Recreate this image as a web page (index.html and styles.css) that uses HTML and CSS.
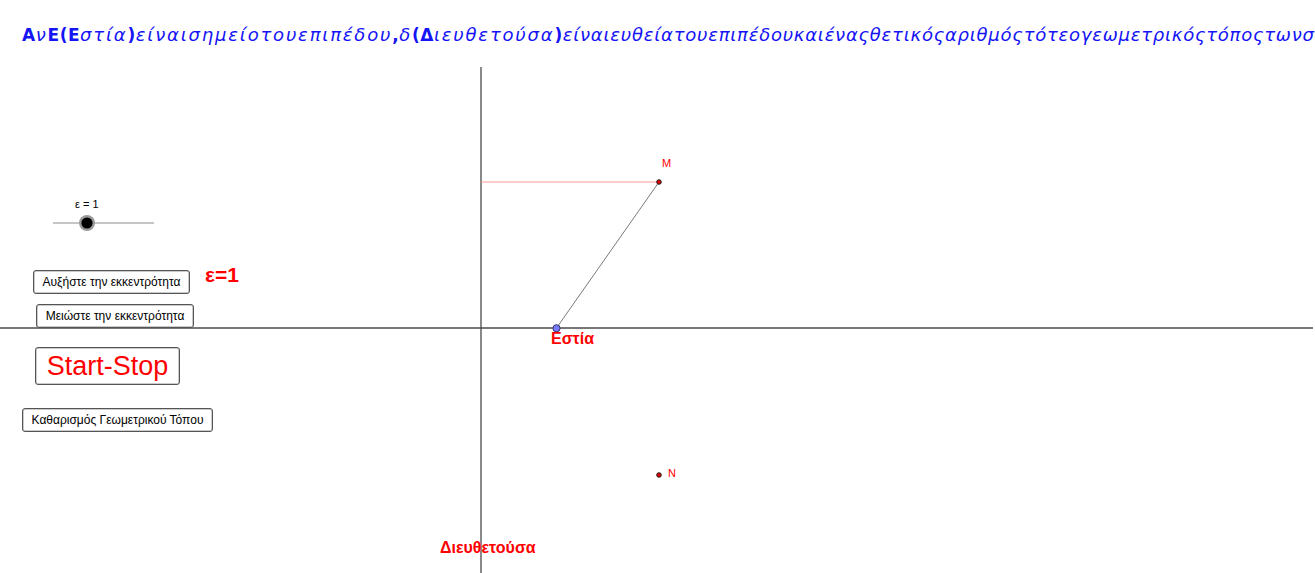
FILE: index.html
```html
<!DOCTYPE html>
<html lang="el">
<head>
<meta charset="utf-8">
<title>Κωνικές τομές</title>
<link rel="stylesheet" href="styles.css">
</head>
<body>
<div class="applet">
  <svg class="drawing" width="1315" height="573" viewBox="0 0 1315 573" xmlns="http://www.w3.org/2000/svg">
    <line class="axis" x1="481" y1="67" x2="481" y2="573"/>
    <line class="axis" x1="0" y1="328" x2="1313" y2="328"/>
    <line class="trace" x1="481" y1="182" x2="659" y2="182"/>
    <line class="segment" x1="659" y1="182" x2="556.5" y2="328"/>
    <circle class="pt" cx="659" cy="182" r="2.3"/>
    <circle class="pt" cx="659" cy="475" r="2.3"/>
    <circle class="focus" cx="556.5" cy="328.3" r="3.6"/>
    <text class="lbl-small" x="662" y="167">M</text>
    <text class="lbl-small" x="668" y="477">N</text>
    <text class="lbl-focus" x="551" y="344">Εστία</text>
    <text class="lbl-dir" x="440" y="553">Διευθετούσα</text>
    <line class="slider-track" x1="53" y1="223" x2="154" y2="223"/>
    <circle class="knob-ring" cx="87" cy="223" r="8"/>
    <circle class="knob" cx="87" cy="223" r="5.6"/>
    <text class="slider-lbl" x="75" y="208">ε = 1</text>
  </svg>

  <h1 class="title"><b>Α</b><i>ν</i><b>Ε(Ε</b><i>στία</i><b>)</b><i>είναισημείοτουεπιπέδου</i><b>,</b><i>δ</i><b>(Δ</b><i>ιευθετούσα</i><b>)</b><i class="tail">είναιευθείατουεπιπέδουκαιέναςθετικόςαριθμόςτότεογεωμετρικόςτόποςτωνσημείων</i></h1>

  <button class="gg-btn btn-inc">Αυξήστε την εκκεντρότητα</button>
  <span class="ecc">ε=1</span>
  <button class="gg-btn btn-dec">Μειώστε την εκκεντρότητα</button>
  <button class="gg-btn btn-start">Start-Stop</button>
  <button class="gg-btn btn-clear">Καθαρισμός Γεωμετρικού Τόπου</button>
</div>
</body>
</html>
```

FILE: styles.css
```css
* { box-sizing: border-box; }
html, body {
  margin: 0;
  padding: 0;
  background: #ffffff;
}
.applet {
  position: relative;
  width: 1315px;
  height: 573px;
  overflow: hidden;
  font-family: "Liberation Sans", Arial, sans-serif;
}
.drawing {
  position: absolute;
  left: 0;
  top: 0;
}
.axis { stroke: #4a4a4a; stroke-width: 1.3; }
.trace { stroke: #ff9a9a; stroke-width: 1.2; }
.segment { stroke: #7a7a7a; stroke-width: 1; }
.pt { fill: #e00000; stroke: #222; stroke-width: 1; }
.focus { fill: #7a7aff; stroke: #333366; stroke-width: 1; }
.lbl-small {
  font-family: "Liberation Sans", Arial, sans-serif;
  font-size: 11px;
  fill: #ff0000;
}
.lbl-focus {
  font-family: "Liberation Sans", Arial, sans-serif;
  font-size: 16px;
  font-weight: bold;
  fill: #ff0000;
}
.lbl-dir {
  font-family: "Liberation Sans", Arial, sans-serif;
  font-size: 16px;
  font-weight: bold;
  fill: #ff0000;
}
.slider-track { stroke: #8c8c8c; stroke-width: 1; }
.knob-ring { fill: #9a9a9a; }
.knob { fill: #000000; }
.slider-lbl {
  font-family: "Liberation Sans", Arial, sans-serif;
  font-size: 11px;
  fill: #000;
}

.title {
  position: relative;
  margin: 0;
  padding: 25px 0 0 22px;
  white-space: nowrap;
  font-size: 17px;
  line-height: 20px;
  font-weight: normal;
  color: #1414f5;
  font-family: "DejaVu Sans", sans-serif;
}
.title b {
  font-family: "DejaVu Sans", sans-serif;
  font-weight: bold;
  letter-spacing: 0.5px;
}
.title i {
  font-family: "DejaVu Sans", sans-serif;
  font-size: 18px;
  font-style: italic;
  letter-spacing: 1.8px;
}
.title i.tail {
  letter-spacing: 0.75px;
}

.gg-btn {
  position: absolute;
  margin: 0;
  padding: 0;
  background: #ffffff;
  border: 1px solid #555;
  border-radius: 3px;
  box-shadow: inset 0 0 0 0.5px #999;
  font-family: "Liberation Sans", Arial, sans-serif;
  font-size: 12px;
  color: #000;
  text-align: center;
}
.btn-inc { left: 33px; top: 270px; width: 157px; height: 24px; }
.btn-dec { left: 36px; top: 304px; width: 158px; height: 24px; }
.btn-start {
  left: 35px; top: 347px; width: 145px; height: 38px;
  font-size: 27px;
  color: #ff0000;
}
.btn-clear { left: 22px; top: 408px; width: 191px; height: 24px; }
.ecc {
  position: absolute;
  left: 205px;
  top: 263px;
  font-size: 21px;
  line-height: 24px;
  font-weight: bold;
  color: #ff0000;
}
```
